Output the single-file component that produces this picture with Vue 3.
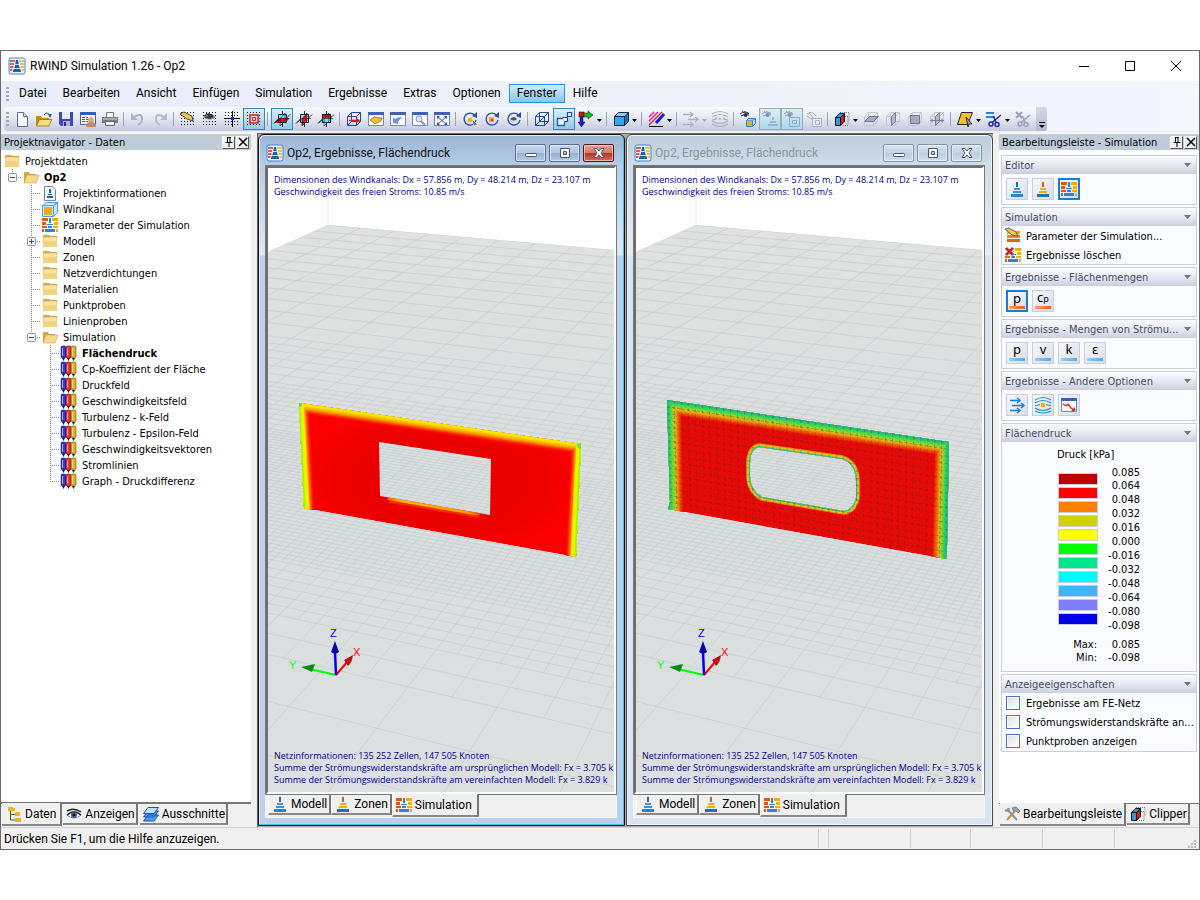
<script setup>
import { ref } from 'vue'

const tower = (a, b, c) =>
  `<path fill="${a}" d="M7 1h2v5h-2z"/><path fill="${b}" d="M5 7h6v2H5z"/><path fill="${b}" d="M4 10h8v2H4z"/><path fill="${c}" d="M2 13h12v3H2z"/>`
const dots = '<path stroke="#111" stroke-dasharray="1 2" d="M1 1.500h15M1 4.500h15M1 7.500h15M1 10.500h15M1 13.500h15"/>'
const eye = (c, x = 0, y = 0, b = '#2a3560') =>
  `<g transform="translate(${x} ${y})"><path fill="none" stroke="${c}" d="M0 3q5-4 9 0M1 5q4-3 8-1M2 0l2 2M5 0v2M8 1L7 3"/><circle cx="5.500" cy="4" r="2" fill="${b}"/></g>`
const cubeWire = '<path fill="none" stroke="#2446a6" d="M1.500 5.500h9v9h-9zM5.500 1.500h9v9h-9zM1.500 5.500l4-4M10.500 5.500l4-4M1.500 14.500l4-4M10.500 14.500l4-4"/>'
const axes = (h, v, f) =>
  `<path fill="${f}" d="M4 3h9v9H4z"/><path fill="${v}" d="M6 8l5-6v8l-5 5z"/><path fill="${h}" d="M0 12l5-5h11l-5 5z"/><path fill="none" stroke="#101828" stroke-width=".9" d="M4.500 3.500h8v8h-8zM8.500 0v3M8.500 12v4M0 12.500l5-5M12 7.500l4-4"/><path fill="none" stroke="#101828" stroke-width=".6" d="M6 8l5-6v8l-5 5zM1 11.500l5-4h9"/>`
const win = '<path fill="#fff" stroke="#6e86b8" d="M.5 1.500h15v13H.5z"/><path fill="#3c62b4" d="M0 1h16v3H0z"/>'
const rot = '<path fill="none" stroke="#2a50a8" stroke-width="1.300" d="M12.500 4A6 6 0 1 0 14 9"/><path fill="#2a50a8" d="M15 1v6l-5-2z"/>'
const ghost = '<path fill="none" stroke="#c3c7d6" d="M1.500 5.500h9v9h-9zM5.500 1.500h9v9h-9zM1.500 5.500l4-4M10.500 5.500l4-4M10.500 14.500l4-4"/>'
const scissors = (c) =>
  `<g fill="none" stroke="${c}" stroke-width="1.500"><circle cx="5" cy="13" r="2"/><circle cx="11" cy="13.500" r="2"/><path d="M6 11.500L15 4M10 11.500L7.500 5"/></g>`
const simBlocks =
  '<path fill="#e5570e" d="M0 1h6v3H0zM0 5h4v3H0zM0 9h5v2H0zM0 12h2v3H0z"/><path fill="#eeae12" d="M10 1h6v3h-6zM12 5h4v3h-4zM11 9h5v2h-5zM14 12h2v3h-2z"/><path fill="#2a84d2" d="M7 1h2v5H7zM5 7h6v1H5zM6 9h4v2H6zM3 12h10v3H3z"/>'
const clip =
  '<path fill="none" stroke="#777" stroke-dasharray="1 1" d="M9 5.500h5v9H9M6 1.500h9v9"/><path fill="#2e9ae0" stroke="#111" d="M1.500 6.500h5v8h-5zM1.500 6.500l4-4h5l-4 4z"/><path fill="#e01818" stroke="#111" d="M6.500 6.500l4-4v8l-4 4z"/>'
const folder =
  '<path fill="#d3a746" d="M1 3q0-1 1-1h5l1 1h7v11H1z"/><path fill="#f3d27c" d="M1 5l1-1h12l1 1v8q0 1-1 1H2q-1 0-1-1z"/><path fill="#fae3a4" d="M2 5h12v3H2z"/>'
const folderOpen =
  '<path fill="#d3a746" d="M1 4q0-1 1-1h4l1 2h6v9H1z"/><path fill="#f6d98c" stroke="#c99b3a" stroke-width=".5" d="M4 6h12l-3 8H1z"/>'

const icons = {
  app: '<rect width="16" height="16" rx="2" fill="#eaf3fc" stroke="#3e86d6"/><path stroke="#dc2c1c" stroke-width="1.500" d="M1 3h5M1 6h4M1 9h3.500M1 12h2.500"/><path stroke="#efae18" stroke-width="1.500" d="M10 3h5M11 6h4M11.500 9H15M12.500 12H15"/><path fill="#1f5f9c" d="M7 2h2l1 6 2 5v1H4v-1l2-5z"/><path stroke="#bfe0f8" d="M6 6.500h4M5 10.500h6"/>',
  tower: tower('#1e6fb8', '#3b94dc', '#2a84d2'),
  zone: tower('#e5570e', '#eeae12', '#1e6fb8'),
  sim: simBlocks,
  new: '<path fill="#fff" stroke="#5a6a94" d="M3.500 1.500h6l4 4v10h-10z"/><path fill="#cdd6ec" stroke="#5a6a94" d="M9.500 1.500v4h4"/>',
  open: '<path fill="#c98a20" d="M0 5h5l1 2h7v8H0z"/><path fill="#fbd97c" stroke="#8a6412" stroke-width=".7" d="M3.500 8.500H16L12.500 15H.5z"/><path fill="none" stroke="#3a5a7a" d="M8 4q3-4 6 0"/><path fill="#3a5a7a" d="M12 3h4l-2 4z"/>',
  save: '<path fill="#4048b8" d="M1 1h14v14H3l-2-2z"/><path fill="#e8ecf8" d="M4 1h8v7H4z"/><path fill="#aab4dc" d="M5 10h7v5H5z"/><path fill="#2a2f80" d="M6 11h2v4H6z"/>',
  table: '<path fill="#fff" stroke="#3c62b4" d="M.5 1.500h15v12H.5z"/><path fill="#2e5fc0" d="M0 1h16v3H0z"/><path stroke="#557" stroke-dasharray="3 1" d="M2 6.500h6M2 8.500h6M2 10.500h6"/><circle cx="11" cy="9" r="3" fill="#e4a878"/><path fill="#c08a70" d="M6 16q0-5 5-5t5 5z"/>',
  print: '<path fill="#fff" stroke="#777" d="M4.500 1.500h7v5h-7z"/><path fill="#777c88" d="M0 6h16v6H0z"/><path fill="#a6abb6" d="M1 7h14v2H1z"/><path fill="#f4f4f4" stroke="#666" d="M3.500 10.500h9v4h-9z"/>',
  undo: '<path fill="none" stroke="#aeb4c6" stroke-width="2" d="M4 6q8-5 8 2 0 4-4 6"/><path fill="#aeb4c6" d="M1 2v7h7z"/>',
  redo: '<path fill="none" stroke="#b6bccc" stroke-width="2" d="M12 6q-8-5-8 2 0 4 4 6"/><path fill="#b6bccc" d="M15 2v7H8z"/>',
  gridHand: dots + '<path fill="#f2c84a" stroke="#222" stroke-width=".8" d="M0 3l4-2 8 4 1 5-6-2z"/>',
  gridEye: dots + '<path fill="#888" d="M1 6q6-7 13 0-6 5-13 0z"/>' + eye('#111', 2, 2),
  gridAxis: dots + '<path stroke="#111" d="M8.500 0v16M0 7.500h16"/><path fill="#1028d0" d="M7 6h3v3H7z"/>',
  gridBox: dots + '<path fill="#cfe8f4" stroke="#e01818" stroke-width="1.500" d="M4 4h8v8H4z"/><path fill="none" stroke="#e01818" d="M6.500 6.500h3v3h-3z"/>',
  ax1: axes('#e81010', 'none', '#8fd0ea'),
  ax2: axes('none', '#e81010', '#8fd0ea'),
  ax3: axes('#8fd0ea', 'none', '#e81010'),
  wire: cubeWire + '<path stroke="#e02020" stroke-width="1.500" d="M3 9.500h8"/><path fill="#e02020" d="M10 6.500l4 3-4 3z"/>',
  winHand: win + '<path fill="#f2c038" stroke="#7a5a10" stroke-width=".7" d="M2 9l4-3 8 1-1 3-6 3z"/>',
  winBack: win + '<path fill="#6d93d8" d="M3 6l2 2q4-3 8-1-5 1-5 6l-5-1z"/>',
  winZoom: win + '<circle cx="7" cy="8" r="3" fill="#dbe9fa" stroke="#8894b0"/><path stroke="#8894b0" stroke-width="2" d="M9 10l4 4"/>',
  winFit: win + '<path stroke="#2a50a8" d="M4 6l8 7M12 6l-8 7"/><path fill="#2a50a8" d="M3 5h3L3 8zM13 5h-3l3 3zM3 14h3l-3-3zM13 14h-3l3-3z"/>',
  rotCur: rot + '<path fill="#efae18" d="M6 7h4v4H6z"/><path fill="#666" stroke="#fff" stroke-width=".5" d="M10 8l6 6-3 0-1 2z"/>',
  rotBox: rot + '<path fill="#efae18" d="M5 6h5v5H5z"/><path fill="#e02020" d="M7 8h2v2H7z"/>',
  rotEye: rot + '<path fill="#555" d="M4 8q4-4 7 0-3 3-7 0z"/>',
  wire2: cubeWire + '<path stroke="#2446a6" d="M1.500 14.500l9-9M5.500 10.500l9-9"/>',
  boxes: '<path fill="#e8f4fc" stroke="#24609c" stroke-width="1.300" d="M1.500 7.500h7v7h-7z"/><path fill="#e8f4fc" stroke="#2446a6" stroke-width="1.200" d="M6.500 6.500h5v4h-3M11.500 1.500h4v4h-4z"/>',
  rgb: '<path fill="#e01010" stroke="#111" stroke-width=".5" d="M1 1h5v5H1z"/><path fill="#10c020" stroke="#111" stroke-width=".5" d="M6 2h4V0l5 4-5 4V6H6z"/><path fill="#1020e0" stroke="#111" stroke-width=".5" d="M2 6h3v5h2l-3.500 5L0 11h2z"/>',
  cube: '<path fill="#37a5ec" stroke="#0c2a44" d="M1.500 5.500h10v9h-10z"/><path fill="#8bd0fa" stroke="#0c2a44" d="M1.500 5.500l4-4h10l-4 4z"/><path fill="#1774b8" stroke="#0c2a44" d="M11.500 5.500l4-4v9l-4 4z"/>',
  stripes: '<path stroke="#e020a0" stroke-width="1.500" d="M1 6l5-5M1 10L10 1"/><path stroke="#e02828" stroke-width="1.500" d="M1 14L14 1"/><path stroke="#1020d0" stroke-width="3" d="M8 12l8-9"/><path stroke="#111" d="M1 15.500h14"/>',
  arrowsOff: '<path stroke="#aab0c2" stroke-width="1.300" d="M0 3.500h10M5 8.500h10M0 13.500h10"/><path fill="none" stroke="#aab0c2" stroke-width="1.300" d="M7 1l3 2.500L7 6M12 6l3 2.500-3 2.500M7 11l3 2.500L7 16"/>',
  wavesOff: '<path fill="none" stroke="#aab0c2" stroke-width="1.200" d="M0 3q8-5 16 0M0 6q8-5 16 0M0 9q3 0 5-2M16 9q-3 0-5-2M0 10q8 5 16 0M0 13q8 5 16 0M6 8h4"/>',
  eyeCube: eye('#333', 0, 0) + '<path fill="#efae18" stroke="#2a84d2" d="M6.500 9.500h6v6h-6z"/><path fill="#9fd4f6" stroke="#2a84d2" d="M6.500 9.500l2-2h7l-3 2M15.500 7.500v5l-3 3"/>',
  eyeTower: eye('#8f9fb4', 0, 0, '#8090a8') + '<path fill="#9cb4cc" d="M10 6h2v3h-2zM8 10h6v2H8zM6 13h10v2H6z"/>',
  eyeBox: eye('#8f9fb4', 0, 0, '#8090a8') + '<path fill="none" stroke="#92a9c2" d="M5.500 6.500h10v9h-10zM8.500 9.500h4v3h-4z"/>',
  eyeDots: '<path fill="none" stroke="#a0a6b8" d="M1 3q5-4 9 2M1 5l6 4M3 2l5 6"/><path fill="#eceef5" stroke="#a9afc1" d="M6.500 7.500h9v8h-9zM9.500 9.500h4v4h-4z"/>',
  clip,
  planeH: ghost + '<path fill="#a6abbf" stroke="#6f768f" d="M1.500 10.500l5-5h9l-5 5z"/>',
  planeV: ghost + '<path fill="#b4b9ca" stroke="#7a819a" d="M6.500 5.500l4-4v9l-4 4z"/>',
  planeF: ghost + '<path fill="#a6abbf" stroke="#6f768f" d="M3.500 4.500h9v8h-9z"/>',
  planeM: ghost + '<path fill="#b4b9ca" stroke="#7a819a" d="M6.500 5.500l4-4v9l-4 4z"/><path stroke="#7a819a" d="M1 9.500h14M3 7.500v4M13 7.500v4"/>',
  para: '<path fill="#f2c038" stroke="#222" d="M4.500 1.500h11l-5 12h-10z"/><path fill="#999" stroke="#111" stroke-width=".8" d="M9 6l6 7h-3l-1 3z"/>',
  cut: '<path stroke="#2a84d2" stroke-width="2" d="M0 2h8M0 6h8"/>' + scissors('#1c2aa0'),
  cutOff: '<path stroke="#9aa0b4" stroke-width="2" d="M1 1l6 6M7 1L1 7"/>' + scissors('#9aa0b4'),
  folder,
  folderOpen,
  info: '<path fill="#f4f8fc" stroke="#6a87a4" d="M2.500 1.500h8l3 3v11h-11z"/><path fill="#1f5f9c" d="M7 4h2v4H7zM6 9h4v1H6zM5 11h6v2H5z"/>',
  canal: '<path fill="#cfeafa" stroke="#4aa0dc" d="M.5 4.500h11v11H.5zM.5 4.500l4-3h11l-4 3zM11.500 4.500l4-3v10l-4 4z"/><path fill="#efae18" d="M2 6h8v8H2z"/>',
  tubes:
    '<rect x="0" y="1" width="5" height="12" rx="1.500" fill="#3038e0" stroke="#14145a" stroke-width=".6"/><rect x="5" y="1" width="5" height="12" rx="1.500" fill="#f03030" stroke="#700808" stroke-width=".6"/><rect x="10" y="1" width="5" height="12" rx="1.500" fill="#e6ac1c" stroke="#6a4c08" stroke-width=".6"/><path stroke="#fff" stroke-opacity=".6" d="M1.500 3v8M6.500 3v8M11.500 3v8"/><path fill="#222" d="M1 13h3l-1.500 3zM6 13h3l-1.500 3zM11 13h3l-1.500 3z"/>',
  paramHand:
    '<path fill="#f6a020" d="M2 3h13v3H2z"/><path fill="#f08020" d="M2 7h13v3H2z"/><path fill="#e86010" d="M2 11h13v3H2z"/><path fill="#f2c84a" stroke="#3a4a5a" stroke-width=".8" d="M0 1l4-1 7 4 2 4-6-1z"/>',
  clear: simBlocks + '<path stroke="#fff" stroke-width="5" d="M1 1l7 7M8 1L1 8"/><path stroke="#c82a20" stroke-width="2.800" d="M1 1l7 7M8 1L1 8"/>',
  arrows: '<path stroke="#1f7fcc" stroke-width="1.500" d="M1 3.500h9M3 8.500h12M1 13.500h9"/><path fill="none" stroke="#1f7fcc" stroke-width="1.500" d="M8 1l3 2.500L8 6M12 6l3 2.500-3 2.500M8 11l3 2.500L8 16"/>',
  waves: '<path fill="none" stroke="#1f8fcc" stroke-width="1.100" d="M0 3q8-5 16 0M0 6q8-5 16 0M0 8.500q3 0 5-1M16 8.500q-3 0-5-1M0 11q8 5 16 0M0 14q8 4 16 0"/><path fill="#efae18" d="M6 6h4v4H6z"/>',
  graph: win + '<path fill="none" stroke="#e02020" stroke-width="1.300" d="M2 7l3 2 2-2 3 4 3 2"/><path fill="#e02020" d="M14 14v-4l-4 4z"/>',
  data: '<path fill="none" stroke="#555" d="M4.500 5v9h5M4.500 8.500h5"/><path fill="#efb428" d="M2 1h5v1h2v3H2zM9 6h5v4H9zM9 12h6v4H9z"/>',
  eye: '<path fill="#fff" stroke="#888" d="M1 9q7-7 14 0-7 6-14 0z"/><path fill="none" stroke="#222" stroke-width="1.500" d="M1 5q7-4 14 1M1 9q7-6 14 0"/><circle cx="8" cy="9" r="3" fill="#3c5c9c"/><circle cx="8" cy="9" r="1.300" fill="#111"/>',
  layers: '<path fill="#4da0ee" stroke="#1c4fb0" d="M5 9h10.500l-4.500 6H.5zM5 5h10.500l-4.500 6H.5z"/><path fill="#bfe2fc" stroke="#1c4fb0" d="M5 1.500h10.500l-4.500 6H.5z"/>',
  tools: '<path stroke="#8a8f9c" stroke-width="2" d="M3 3l10 11"/><path stroke="#c09048" stroke-width="2" d="M3 14l7-8"/><path fill="#9aa0ae" stroke="#555" stroke-width=".6" d="M8 2l4-1 4 4-2 2-2-2-2 1z"/><path fill="none" stroke="#8a8f9c" stroke-width="2" d="M1 4q3 2 4-2"/>',
}

const menus = ['Datei', 'Bearbeiten', 'Ansicht', 'Einfügen', 'Simulation', 'Ergebnisse', 'Extras', 'Optionen', 'Fenster', 'Hilfe']

// Toolbar tokens: "|" separator, "*" checked, "~" checked and disabled, ">" with drop-down
const tools = (
  'new open save table print | undo redo | gridHand gridEye gridAxis *gridBox | *ax1 ax2 ax3 | ' +
  'wire winHand winBack winZoom winFit | rotCur rotBox rotEye | wire2 *boxes >rgb | >cube | >stripes | ' +
  '>arrowsOff wavesOff | eyeCube ~eyeTower ~eyeBox eyeDots | >clip planeH planeV planeF planeM | >para >cut cutOff'
)
  .split(' ')
  .map((t) => {
    const flag = /^[*~>]/.test(t) ? t[0] : ''
    return { sep: t === '|', on: flag === '*' || flag === '~', off: flag === '~' || /Off$/.test(t), drop: flag === '>', icon: flag ? t.slice(1) : t }
  })

// Guide codes: b blank, t tee, l last, p plus box, m minus box on last, r root minus box
const tree = [
  ['', 'folder', 'Projektdaten'],
  ['r', 'folderOpen', 'Op2', true],
  ['bt', 'info', 'Projektinformationen'],
  ['bt', 'canal', 'Windkanal'],
  ['bt', 'sim', 'Parameter der Simulation'],
  ['bp', 'folder', 'Modell'],
  ['bt', 'folder', 'Zonen'],
  ['bt', 'folder', 'Netzverdichtungen'],
  ['bt', 'folder', 'Materialien'],
  ['bt', 'folder', 'Punktproben'],
  ['bt', 'folder', 'Linienproben'],
  ['bm', 'folderOpen', 'Simulation'],
  ['bbt', 'tubes', 'Flächendruck', true],
  ['bbt', 'tubes', 'Cp-Koeffizient der Fläche'],
  ['bbt', 'tubes', 'Druckfeld'],
  ['bbt', 'tubes', 'Geschwindigkeitsfeld'],
  ['bbt', 'tubes', 'Turbulenz - k-Feld'],
  ['bbt', 'tubes', 'Turbulenz - Epsilon-Feld'],
  ['bbt', 'tubes', 'Geschwindigkeitsvektoren'],
  ['bbt', 'tubes', 'Stromlinien'],
  ['bbl', 'tubes', 'Graph - Druckdifferenz'],
].map(([guides, icon, text, bold]) => ({ guides: [...guides], icon, text, bold }))

// Wind tunnel floor: perspective grid, refined towards the wall
const P0 = [60, 57], VA = [-3029, -212], VB = [712, -236], KA = 0.0105, KB = 0.02
const project = (u, v) => {
  const s = KA * u, t = KB * v, w = 1 - s - t
  return [(P0[0] - s * VA[0] - t * VB[0]) / w, (P0[1] - s * VA[1] - t * VB[1]) / w]
}
const seg = (u1, v1, u2, v2) => {
  const a = project(u1, v1), b = project(u2, v2)
  return `M${a[0].toFixed(1)} ${a[1].toFixed(1)}L${b[0].toFixed(1)} ${b[1].toFixed(1)}`
}
const floorGrid = (() => {
  let d = ''
  const zones = [
    [0, 24, 0, 34, 1],
    [0, 19, 12, 25, 0.5],
    [1, 16, 15, 24, 0.25],
    [4, 15, 17.5, 22.5, 0.125],
  ]
  for (const [u1, u2, v1, v2, step] of zones) {
    for (let u = u1; u <= u2; u += step) if (step === 1 || u % (step * 2)) d += seg(u, v1, u, v2)
    for (let v = v1; v <= v2; v += step) if (step === 1 || v % (step * 2)) d += seg(u1, v, u2, v)
  }
  return d
})()

const mix = (stops, t) => {
  const k = t * (stops.length - 1), i = Math.min(Math.floor(k), stops.length - 2), f = k - i
  return `rgb(${stops[i].map((c, j) => Math.round(c + (stops[i + 1][j] - c) * f)).join(',')})`
}
const bands = (stops, max, min, n) =>
  Array.from({ length: n }, (_, i) => ({ w: max - ((max - min) * i) / (n - 1), c: mix(stops, i / (n - 1)) }))

const edgeA = bands([[248, 0, 0], [250, 20, 0], [252, 80, 0], [248, 150, 0], [242, 195, 0], [245, 230, 0]], 22, 4, 13)
const sideA = bands([[244, 225, 0], [248, 245, 0], [220, 250, 0], [160, 245, 20]], 10, 2, 5)
const edgeB = bands([[236, 8, 8], [246, 50, 0], [240, 120, 16], [230, 185, 30], [130, 220, 50], [50, 220, 80], [30, 180, 150]], 31, 2, 15)
const holeB = bands([[236, 8, 8], [244, 140, 20], [220, 200, 30], [240, 200, 30], [40, 200, 160]], 9, 2, 7)
const holePath = 'M114 308V296Q114 281 123 279L206 291Q220 296 220 314V330Q217 342 208 343L126 329Q114 322 114 308z'

const quad = [[31, 232], [313, 274], [310, 391], [34, 341]]
const at = (a, b) => {
  const [p, q, r, s] = quad
  return [0, 1].map((i) => ((1 - a) * (1 - b) * p[i] + a * (1 - b) * q[i] + a * b * r[i] + (1 - a) * b * s[i]).toFixed(1))
}
const mesh = (() => {
  let d = ''
  const nx = 40, ny = 16
  for (let i = 1; i < nx; i++) d += `M${at(i / nx, 0)}L${at(i / nx, 1)}`
  for (let j = 1; j < ny; j++) d += `M${at(0, j / ny)}L${at(1, j / ny)}`
  return d
})()
const meshDiag = (() => {
  let d = ''
  const nx = 40, ny = 16
  for (let i = 0; i < nx; i++) for (let j = 0; j < ny; j++) d += `M${at(i / nx, j / ny)}L${at((i + 1) / nx, (j + 1) / ny)}`
  return d
})()

const views = [
  { id: 'a', active: true },
  { id: 'b', active: false },
]
const title = 'Op2, Ergebnisse, Flächendruck'
const topLines = ['Dimensionen des Windkanals: Dx = 57.856 m, Dy = 48.214 m, Dz = 23.107 m', 'Geschwindigkeit des freien Stroms: 10.85 m/s']
const bottomLines = [
  'Netzinformationen: 135 252 Zellen, 147 505 Knoten',
  'Summe der Strömungswiderstandskräfte am ursprünglichen Modell: Fx = 3.705 k',
  'Summe der Strömungswiderstandskräfte am vereinfachten Modell: Fx = 3.829 k',
]
const viewTabs = [['tower', 'Modell'], ['zone', 'Zonen'], ['sim', 'Simulation']]
const leftTabs = [['data', 'Daten'], ['eye', 'Anzeigen'], ['layers', 'Ausschnitte']]
const rightTabs = [['tools', 'Bearbeitungsleiste'], ['clip', 'Clipper']]

const panels = [
  { title: 'Editor', icons: [['tower'], ['zone'], ['sim', true]] },
  { title: 'Simulation', links: [['paramHand', 'Parameter der Simulation...'], ['clear', 'Ergebnisse löschen']] },
  { title: 'Ergebnisse - Flächenmengen', glyphs: [['p', true], ['cp']], tone: 'warm' },
  { title: 'Ergebnisse - Mengen von Strömu...', glyphs: [['p'], ['v'], ['k'], ['ε']], tone: 'cool' },
  { title: 'Ergebnisse - Andere Optionen', icons: [['arrows'], ['waves'], ['graph']] },
  { title: 'Flächendruck', legend: true },
  { title: 'Anzeigeeigenschaften', checks: true },
]
const colours = ['red9', 'red', 'orange', 'olive', 'yellow', 'green', 'mint', 'cyan', 'sky', 'violet', 'blue']
const values = ['0.085', '0.064', '0.048', '0.032', '0.016', '0.000', '-0.016', '-0.032', '-0.048', '-0.064', '-0.080', '-0.098']
const checks = ref([
  { label: 'Ergebnisse am FE-Netz', on: false },
  { label: 'Strömungswiderstandskräfte an...', on: false },
  { label: 'Punktproben anzeigen', on: false },
])
</script>

<template>
  <div class="page">
    <div class="app">
      <header class="titlebar">
        <svg class="ico" viewBox="0 0 16 16" v-html="icons.app"></svg>
        <h1>RWIND Simulation 1.26 - Op2</h1>
        <button class="sys" aria-label="Minimieren"><svg viewBox="0 0 12 12"><path d="M1 6.500h10" /></svg></button>
        <button class="sys" aria-label="Maximieren"><svg viewBox="0 0 12 12"><path d="M1.500 1.500h9v9h-9z" /></svg></button>
        <button class="sys" aria-label="Schließen"><svg viewBox="0 0 12 12"><path d="M1 1l10 10M11 1L1 11" /></svg></button>
      </header>

      <nav class="menubar">
        <i class="grip"></i>
        <button v-for="m in menus" :key="m" :class="{ hot: m === 'Fenster' }">{{ m }}</button>
      </nav>

      <div class="toolrow">
        <div class="toolbar">
          <i class="grip"></i>
          <template v-for="(t, i) in tools" :key="i">
            <i v-if="t.sep" class="sep"></i>
            <button v-else class="tool" :class="{ on: t.on, faded: t.on && t.off, drop: t.drop, off: t.off }" :aria-label="t.icon">
              <svg class="ico" viewBox="0 0 16 16" v-html="icons[t.icon]"></svg>
              <svg v-if="t.drop" class="caret" viewBox="0 0 5 3"><path d="M0 0h5L2.500 3z" /></svg>
            </button>
          </template>
        </div>
        <button class="overflow" aria-label="Weitere"><svg viewBox="0 0 6 6"><path d="M0 0h6v1H0zM0 3h6L3 6z" /></svg></button>
      </div>

      <main class="main">
        <aside class="dock left">
          <div class="dockhead">
            <span>Projektnavigator - Daten</span>
            <button aria-label="Anheften"><svg viewBox="0 0 10 10"><path d="M3.500 0v5M6 0v5M3 .5h4M1.500 5.500h7M5 5v5" /></svg></button>
            <button aria-label="Schließen"><svg viewBox="0 0 10 10"><path class="x" d="M1 1l8 8M9 1L1 9" /></svg></button>
          </div>
          <ul class="tree">
            <li v-for="n in tree" :key="n.text">
              <svg v-for="(g, i) in n.guides" :key="i" class="guide" viewBox="0 0 19 16">
                <template v-if="g !== 'b'">
                  <path v-if="g === 'l' || g === 'm' || g === 'r'" d="M9.500 0v8" />
                  <path v-else d="M9.500 0v16" />
                  <path d="M9 8.500h10" />
                  <g v-if="'pmr'.includes(g)">
                    <rect x="5.500" y="4.500" width="8" height="8" rx="1" />
                    <path class="mark" d="M7 8.500h5" />
                    <path v-if="g === 'p'" class="mark" d="M9.500 6v5" />
                  </g>
                </template>
              </svg>
              <svg class="ico" viewBox="0 0 16 16" v-html="icons[n.icon]"></svg>
              <span :class="{ bold: n.bold }">{{ n.text }}</span>
            </li>
          </ul>
          <div class="tabs">
            <button v-for="(t, i) in leftTabs" :key="t[1]" :class="{ active: i === 0 }">
              <svg class="ico" viewBox="0 0 16 16" v-html="icons[t[0]]"></svg>{{ t[1] }}
            </button>
          </div>
        </aside>

        <section class="mdi">
          <article v-for="v in views" :key="v.id" class="window" :class="{ active: v.active }">
            <header>
              <svg class="ico" viewBox="0 0 16 16" v-html="icons.app"></svg>
              <h2>{{ title }}</h2>
              <button aria-label="Minimieren"><svg viewBox="0 0 14 12"><rect x="1.500" y="6.500" width="11" height="3" rx="1" /></svg></button>
              <button aria-label="Maximieren"><svg viewBox="0 0 14 12"><path fill-rule="evenodd" d="M2.500 1.500h9v9h-9zM5.500 4.500h3v3h-3z" /></svg></button>
              <button class="close" aria-label="Schließen">
                <svg viewBox="0 0 14 12"><path d="M2 1.500h3l2 2.500 2-2.500h3L9 6l3 4.500H9L7 8l-2 2.500H2L5 6z" /></svg>
              </button>
            </header>
            <div class="content">
              <div class="view">
                <svg class="scene" viewBox="0 0 346 626" preserveAspectRatio="xMinYMin slice">
                  <defs>
                    <linearGradient id="floorShade" x1="0" y1="0" x2="0" y2="1">
                      <stop offset="0" stop-color="#e0e1e1" />
                      <stop offset=".5" stop-color="#dadede" />
                      <stop offset="1" stop-color="#dde0e0" />
                    </linearGradient>
                    <linearGradient id="sillA" x1="118" y1="0" x2="216" y2="0" gradientUnits="userSpaceOnUse">
                      <stop offset="0" stop-color="#ff5a00" />
                      <stop offset=".15" stop-color="#ffb400" />
                      <stop offset=".85" stop-color="#ff9a00" />
                      <stop offset="1" stop-color="#f02000" />
                    </linearGradient>
                    <radialGradient id="redCore">
                      <stop offset="0" stop-color="#e80000" />
                      <stop offset=".7" stop-color="#ec0000" />
                      <stop offset="1" stop-color="#fa0000" />
                    </radialGradient>
                    <clipPath id="floorClip"><path d="M60 57L346 82V626H0V84z" /></clipPath>
                    <clipPath id="wallA"><path clip-rule="evenodd" d="M31 235L313 276 308 389 36 340zM111 274L223 291 222 347 112 328z" /></clipPath>
                    <clipPath id="wallB"><path clip-rule="evenodd" :d="'M31 232L313 274 311 379 310 391 32 341 34 334z' + holePath" /></clipPath>
                  </defs>
                  <path fill="url(#floorShade)" d="M60 57L346 82V626H0V84z" />
                  <g clip-path="url(#floorClip)"><path class="grid" :d="floorGrid" /></g>
                  <path fill="none" stroke="#e4e6e6" d="M60 0V57" />
                  <g v-if="v.active" clip-path="url(#wallA)">
                    <path fill="url(#redCore)" d="M31 235L313 276 308 389 36 340z" />
                    <path v-for="(b, i) in edgeA" :key="i" class="band" :stroke="b.c" :stroke-width="b.w" d="M37 350L31 235 313 276 307 400" />
                    <path v-for="(b, i) in sideA" :key="'s' + i" class="band" :stroke="b.c" :stroke-width="b.w" d="M37 350L31 235M313 276L307 400" />
                    <circle cx="31" cy="236" r="3" fill="#60e020" />
                    <circle cx="313" cy="277" r="4" fill="#70e820" />
                    <path stroke="#ff5000" stroke-width="10" d="M122 330L211 345" opacity=".5" />
                    <path stroke="url(#sillA)" stroke-width="6" d="M120 329L212 345" />
                  </g>
                  <g v-else clip-path="url(#wallB)">
                    <path fill="#ea0808" d="M31 232L313 274 310 391 32 341z" />
                    <path v-for="(b, i) in edgeB" :key="i" class="band" :stroke="b.c" :stroke-width="b.w" d="M33 355L31 232 313 274 310 405" />
                    <path v-for="(b, i) in holeB" :key="'h' + i" class="band" :stroke="b.c" :stroke-width="b.w" :d="holePath" />
                    <path class="mesh" :d="mesh" />
                    <path class="mesh diag" :d="meshDiag" />
                  </g>
                  <g class="triad">
                    <path stroke="#0f0" stroke-width="2" d="M68 507L42 501" />
                    <path fill="#0a8a14" d="M33 499l14-3-3 8z" />
                    <path stroke="#f00" stroke-width="2" d="M68 507L79 494" />
                    <path fill="#b81414" d="M85 487l-9 5 4 6q4-3 5-11z" />
                    <path stroke="#00f" stroke-width="2.500" d="M68 507L67 484" />
                    <path fill="#0808b8" d="M67 473l-4 11q4 3 8 0z" />
                    <text x="62" y="469" fill="#00f">Z</text>
                    <text x="85" y="488" fill="#f00">X</text>
                    <text x="21" y="501" fill="#0f0">Y</text>
                  </g>
                </svg>
                <p class="note"><span v-for="l in topLines" :key="l">{{ l }}</span></p>
                <p class="note end"><span v-for="l in bottomLines" :key="l">{{ l }}</span></p>
              </div>
              <div class="viewtabs">
                <button v-for="(t, i) in viewTabs" :key="t[1]" :class="{ active: i === 2 }">
                  <svg class="ico" viewBox="0 0 16 16" v-html="icons[t[0]]"></svg>{{ t[1] }}
                </button>
              </div>
            </div>
          </article>
        </section>

        <aside class="dock right">
          <div class="dockhead">
            <span>Bearbeitungsleiste - Simulation</span>
            <button aria-label="Anheften"><svg viewBox="0 0 10 10"><path d="M3.500 0v5M6 0v5M3 .5h4M1.500 5.500h7M5 5v5" /></svg></button>
            <button aria-label="Schließen"><svg viewBox="0 0 10 10"><path class="x" d="M1 1l8 8M9 1L1 9" /></svg></button>
          </div>
          <div class="panels">
            <section v-for="p in panels" :key="p.title" class="panel">
              <h3><span>{{ p.title }}</span><svg viewBox="0 0 7 4"><path d="M0 0h7L3.500 4z" /></svg></h3>
              <div v-if="p.icons" class="row">
                <button v-for="i in p.icons" :key="i[0]" :class="{ sel: i[1] }" :aria-label="i[0]">
                  <svg class="ico" viewBox="0 0 16 16" v-html="icons[i[0]]"></svg>
                </button>
              </div>
              <div v-else-if="p.glyphs" class="row" :class="p.tone">
                <button v-for="g in p.glyphs" :key="g[0]" class="glyph" :class="{ sel: g[1] }">
                  <span v-if="g[0] === 'cp'">c<small>p</small></span><span v-else>{{ g[0] }}</span>
                </button>
              </div>
              <div v-else-if="p.links" class="links">
                <button v-for="l in p.links" :key="l[1]"><svg class="ico" viewBox="0 0 16 16" v-html="icons[l[0]]"></svg><span>{{ l[1] }}</span></button>
              </div>
              <div v-else-if="p.legend" class="legend">
                <h4>Druck [kPa]</h4>
                <ul class="swatches"><li v-for="c in colours" :key="c" :class="c"></li></ul>
                <ul class="values"><li v-for="x in values" :key="x">{{ x }}</li></ul>
                <dl class="ext"><dt>Max:</dt><dd>0.085</dd><dt>Min:</dt><dd>-0.098</dd></dl>
              </div>
              <div v-else class="checks">
                <label v-for="c in checks" :key="c.label"><input v-model="c.on" type="checkbox" /><span>{{ c.label }}</span></label>
              </div>
            </section>
          </div>
          <div class="tabs">
            <button v-for="(t, i) in rightTabs" :key="t[1]" :class="{ active: i === 0 }">
              <svg class="ico" viewBox="0 0 16 16" v-html="icons[t[0]]"></svg>{{ t[1] }}
            </button>
          </div>
        </aside>
      </main>

      <footer class="status">
        <span>Drücken Sie F1, um die Hilfe anzuzeigen.</span>
        <i class="c1"></i><i class="c2"></i><i class="c3"></i><i class="c4"></i><i class="c4"></i><i class="c5"></i>
        <svg viewBox="0 0 9 9"><path d="M6 0h2v2H6zM3 3h2v2H3zM6 3h2v2H6zM0 6h2v2H0zM3 6h2v2H3zM6 6h2v2H6z" /></svg>
      </footer>
    </div>
  </div>
</template>

<style>
body { background: #fff; }
</style>

<style scoped>
* { box-sizing: border-box; }
.page {
  --seg: Roboto, 'Open Sans', sans-serif;
  --tah: 'DejaVu Sans Condensed', 'DejaVu Sans', sans-serif;
  min-height: 100vh; padding: 50px 0; display: flex; font: 12px/16px var(--seg); color: #000;
}
.app { flex: 1; min-width: 0; display: flex; flex-direction: column; border: 1px solid #6a6a6a; background: #f0f0f0; }
h1, h2, h3, h4, ul, p, dl, dd { margin: 0; padding: 0; font-weight: 400; font-size: inherit; list-style: none; }
button { font: inherit; color: inherit; background: none; border: 0; padding: 0; margin: 0; }
svg { display: block; }
.ico { width: 16px; height: 16px; flex: none; overflow: visible; fill: none; }

.titlebar { height: 30px; background: #fff; display: flex; align-items: center; padding-left: 8px; }
.titlebar h1 { flex: 1; padding-left: 5px; }
.sys { width: 46px; height: 30px; display: grid; place-items: center; }
.sys svg { width: 12px; height: 12px; fill: none; stroke: #000; }

.menubar { height: 26px; display: flex; align-items: center; background: linear-gradient(90deg, #e9ecfa, #f3f6fb); padding: 0 0 1px 5px; }
.grip { width: 3px; height: 14px; flex: none; background: repeating-linear-gradient(#a4a8b8 0 2px, transparent 2px 4px); }
.menubar .grip { margin-right: 2px; }
.menubar button { height: 19px; padding: 0 7px; border: 1px solid transparent; line-height: 17px; }
.menubar .hot { border-color: #2a92e8; background: linear-gradient(#d2ecfa, #8cc6e2); }

.toolrow { height: 24px; display: flex; background: linear-gradient(90deg, #e9ecfa, #f3f6fb); padding-left: 3px; }
.toolbar { display: flex; align-items: center; background: linear-gradient(#fafbfe, #e6e9f3 45%, #c3c9de); padding: 0 2px; border-radius: 3px 0 0 3px; }
.toolbar .grip { margin-right: 2px; }
.tool { width: 22px; height: 22px; flex: none; border: 1px solid transparent; display: flex; align-items: center; padding-left: 2px; }
.tool.drop { width: 29px; }
.tool.on { border-color: #3a86ae; background: linear-gradient(#d8eef7, #92c9e2); }
.tool.faded { border-color: #9cabb4; background: linear-gradient(#dcf0f8, #a8d8ec); }
.caret { width: 5px; height: 3px; flex: none; margin: 2px 0 0 3px; fill: #000; }
.tool.off .caret { fill: #a4a9ba; }
.sep { width: 1px; height: 14px; margin: 0 3px 0 2px; background: #9ea3b4; flex: none; }
.overflow { width: 11px; background: linear-gradient(#d4d8e6, #b4bacd); display: grid; place-items: end center; padding-bottom: 3px; border-radius: 0 2px 2px 0; }
.overflow svg { width: 6px; height: 6px; }

.main { flex: 1; min-height: 0; display: grid; grid-template-columns: 250px minmax(0, 1fr) 200px; gap: 6px; padding-top: 2px; }
.dock { display: flex; flex-direction: column; min-width: 0; background: #fff; padding-top: 1px; font-family: var(--tah); font-size: 11px; }
.dockhead { height: 16px; display: flex; align-items: center; background: #bfcddb; padding: 0 2px 0 3px; }
.dockhead span { flex: 1; white-space: nowrap; padding-top: 2px; }
.dockhead button { width: 13px; height: 13px; background: #f0f0f0; border: 1px solid; border-color: #fff #555 #555 #fff; display: grid; place-items: center; margin-left: 1px; }
.dockhead svg { width: 10px; height: 10px; fill: none; stroke: #000; }
.dockhead .x { stroke-width: 1.500px; }

.tree { flex: 1; padding: 3px 0 0 2px; border-bottom: 2px solid #777; }
.tree li { display: flex; height: 16px; align-items: center; white-space: nowrap; }
.tree span { padding-top: 2px; }
.tree .ico { margin: 0 5px 0 1px; }
.guide { width: 19px; height: 16px; flex: none; fill: none; stroke: #888; stroke-dasharray: 1 1; }
.guide rect { fill: #f4f6fa; stroke: #8a93a6; stroke-dasharray: none; }
.guide .mark { stroke: #2b4aa0; stroke-dasharray: none; }
.bold { font-weight: 700; }

.tabs { height: 23px; display: flex; align-items: flex-start; background: #f0f0f0; font: 12px/16px var(--seg); }
.tabs button { display: flex; align-items: center; height: 21px; padding: 1px 1px 0 3px; gap: 3px; border-right: 2px solid #777; border-bottom: 2px solid #888; margin-right: 2px; white-space: nowrap; }
.tabs button.active { height: 23px; margin: -1px 1px 0; padding: 1px 4px 0; background: #f0f0f0; }
.right .tabs button.active { padding-right: 2px; }

.mdi { background: #ababab; border-top: 1px solid #646464; border-left: 1px solid #646464; display: grid; grid-template-columns: repeat(2, minmax(0, 1fr)); gap: 1px; padding-bottom: 1px; }
.window { min-width: 0; display: flex; flex-direction: column; border: 1px solid #4a4a4a; border-radius: 6px 6px 0 0; padding: 0 7px 7px 6px; box-shadow: inset 0 0 0 1px #eef4fa; background: linear-gradient(#bfcddb 0, #cfdce9 31px, #e4edf6 120px, #d7e4f1 121px); }
.window.active { border-color: #111; box-shadow: inset -1px -1px 0 #38c8ea, inset 1px 1px 0 #dfeaf6; background: linear-gradient(#9ab4d3 0, #b6cde7 31px, #dde9f6 120px, #b9d1ea 121px); }
.window header { height: 30px; display: flex; align-items: center; padding: 6px 3px 0 2px; gap: 3px; }
.window h2 { flex: 1; padding-left: 1px; color: #8d959e; white-space: nowrap; }
.window.active h2 { color: #111; }
.window header button { width: 31px; height: 18px; border: 1px solid #8194ab; border-radius: 2px; display: grid; place-items: center; background: linear-gradient(#d6e2ef, #c3d2e2 50%, #bccddf 51%, #d0deec); box-shadow: inset 0 0 0 1px #ffffff80; }
.window.active header button { border-color: #566f92; background: linear-gradient(#c4d6eb, #b3c9e2 48%, #93b0d2 50%, #b2cae6); }
.window.active header .close { border-color: #50131a; background: linear-gradient(#e3a297, #d4796a 48%, #b63222 50%, #d0705a); }
.window header svg:not(.ico) { width: 14px; height: 12px; fill: #fff; stroke: #4c566a; }
.content { flex: 1; display: flex; flex-direction: column; background: #f0f0f0; border: 1px solid #f8fafc; min-width: 0; }
.view { flex: 1; min-height: 240px; display: grid; grid-template: minmax(0, 1fr) auto / minmax(0, 1fr); border: 2px solid; border-color: #6e6e6e #fff #fff #6e6e6e; outline: 1px solid #777; background: #fff; position: relative; overflow: hidden; }
.scene { position: absolute; inset: 0; width: 100%; height: 100%; }
.grid { fill: none; stroke: #c9cece; stroke-width: 1px; stroke-opacity: .8; }
.band { fill: none; stroke-linejoin: round; }
.mesh { fill: none; stroke: #4a3a10; stroke-opacity: .5; stroke-width: .7px; stroke-dasharray: 3 2; }
.diag { stroke-opacity: .25; }
.triad text { font: 11px 'Liberation Sans', sans-serif; }
.triad path { stroke-linejoin: round; }
.note { position: relative; padding: 6px 0 0 6px; font: 9px/12px 'Open Sans', sans-serif; color: #000080; white-space: nowrap; }
.note.end { padding: 0 0 6px 6px; }
.note span { display: block; }
.viewtabs { height: 23px; display: flex; align-items: flex-start; padding-left: 2px; }
.viewtabs button { display: flex; align-items: center; gap: 3px; height: 21px; padding: 0 2px 0 3px; border-right: 2px solid #777; border-bottom: 2px solid #888; border-left: 1px solid #fff; white-space: nowrap; }
.viewtabs .active { height: 23px; padding: 0 5px 0 3px; position: relative; background: #f0f0f0; }

.panels { flex: 1; padding: 5px 2px 0; display: flex; flex-direction: column; gap: 2px; border-bottom: 1px solid #777; }
.panel { border: 1px solid #c8cde0; background: #fafbfe; }
.panel h3 { height: 18px; display: flex; align-items: center; padding: 0 5px 0 3px; color: #454d5c; background: linear-gradient(#fbfcfe, #e2e5ef 60%, #c9cee0); }
.panel h3 span { flex: 1; white-space: nowrap; padding-top: 2px; }
.panel h3 svg { width: 7px; height: 4px; fill: #6e7484; }
.row { display: flex; gap: 4px; padding: 4px; }
.row button { width: 22px; height: 22px; display: grid; place-items: center; border: 1px solid #c8cde0; background: linear-gradient(135deg, #f8f9fc, #d8dce8); }
.row .sel { border: 2px solid #0f7fd8; }
.row .glyph { font: 13px/12px 'Noto Sans', sans-serif; display: flex; flex-direction: column; justify-content: space-between; align-items: center; }
.glyph::after { content: ''; width: 16px; height: 3px; margin-bottom: 2px; background: linear-gradient(90deg, #9ccbee, #5aaae0); }
.warm .glyph::after { background: linear-gradient(90deg, #ffa070, #ff5a10); }
.glyph.sel::after { margin-bottom: 1px; }
.glyph small { font-size: 9px; }
.links span { padding-top: 2px; }
.links button { display: flex; align-items: center; height: 19px; padding-left: 3px; gap: 5px; width: 100%; white-space: nowrap; }
.legend { display: grid; grid-template-columns: 95px 43px 1fr; padding: 6px 0 7px; line-height: 13px; }
.legend h4 { grid-column: 1 / -1; padding-left: 55px; line-height: 13px; }
.swatches { padding: 12px 0 0 56px; display: grid; gap: 2px; align-content: start; }
.swatches li { width: 40px; height: 12px; border: 1px solid #c8cde0; }
.red9 { background: #bf0000; } .red { background: #f00; } .orange { background: #ff8000; } .olive { background: #d2d200; }
.yellow { background: #ff0; } .green { background: #0f0; } .mint { background: #00e68a; } .cyan { background: #00fafa; }
.sky { background: #40b4ff; } .violet { background: #8080ff; } .blue { background: #0000e6; }
.values { padding-top: 5px; text-align: right; line-height: 14px; }
.values li:first-child { line-height: 13px; }
.ext { grid-column: 1 / 3; display: grid; grid-template-columns: 95px 43px; text-align: right; padding-top: 5px; }
.checks { padding-bottom: 1px; }
.checks label { display: flex; align-items: center; height: 19px; padding-left: 3px; gap: 5px; }
.checks span { white-space: nowrap; padding-top: 2px; }
.checks input { appearance: none; width: 14px; height: 14px; margin: 0 1px; flex: none; border: 1px solid #4a72c0; background: linear-gradient(135deg, #dcdfe4, #fff); box-shadow: inset 0 0 0 1px #fff; }

.status { height: 22px; display: flex; align-items: center; border-top: 1px solid #d4d4d4; padding: 0 2px 0 3px; }
.status span { flex: 1; white-space: nowrap; }
.status i { height: 19px; border-left: 1px solid #d0d0d0; }
.c1 { width: 10px; } .c2 { width: 82px; } .c3 { width: 60px; } .c4 { width: 72px; } .c5 { width: 74px; }
.status svg { width: 9px; height: 9px; fill: #b8b8b8; align-self: flex-end; }
</style>
